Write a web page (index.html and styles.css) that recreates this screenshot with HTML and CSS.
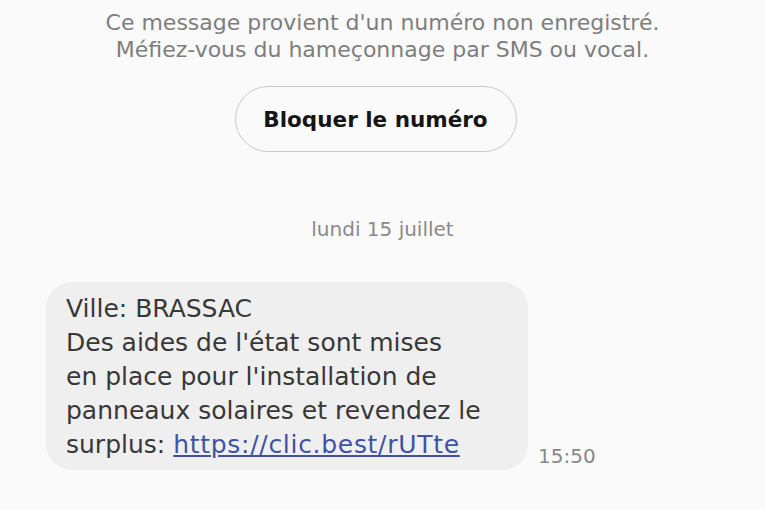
FILE: index.html
```html
<!DOCTYPE html>
<html lang="fr">
<head>
    <meta charset="UTF-8">
    <meta name="viewport" content="width=device-width, initial-scale=1.0">
    <title>Messages</title>
    <link rel="stylesheet" href="styles.css">
</head>
<body>
    <div class="thread">
        <p class="notice">Ce message provient d'un numéro non enregistré.<br>Méfiez-vous du hameçonnage par SMS ou vocal.</p>

        <button class="block-button" type="button">Bloquer le numéro</button>

        <p class="day">lundi 15 juillet</p>

        <div class="message-row">
            <div class="bubble">
                Ville: BRASSAC<br>
                Des aides de l'état sont mises<br>
                en place pour l'installation de<br>
                panneaux solaires et revendez le<br>
                surplus: <a href="#" class="link">https://clic.best/rUTte</a>
            </div>
            <span class="time">15:50</span>
        </div>
    </div>
</body>
</html>
```

FILE: styles.css
```css
body {
    margin: 0;
    background-color: #fafafa;
    font-family: 'DejaVu Sans', Roboto, sans-serif;
    height: 100vh;
    overflow: hidden;
}

.thread {
    display: flex;
    flex-direction: column;
    align-items: center;
    padding-top: 9px;
}

.notice {
    margin: 0;
    text-align: center;
    font-size: 22px;
    line-height: 27px;
    color: #7e7e7e;
}

.block-button {
    margin: 23px 14px 0 0;
    width: 282px;
    height: 66px;
    border: 1.5px solid #c9c9c9;
    border-radius: 33px;
    background: #fafafa;
    font-family: 'DejaVu Sans', Roboto, sans-serif;
    font-size: 21.5px;
    font-weight: bold;
    color: #151515;
}

.day {
    margin: 66px 0 0;
    font-size: 20px;
    line-height: 22px;
    color: #8a8a8a;
}

.message-row {
    align-self: stretch;
    display: flex;
    align-items: flex-end;
    gap: 10px;
    margin-top: 42px;
    padding-left: 46px;
}

.bubble {
    width: 442px;
    padding: 10px 20px 8px;
    background-color: #efefef;
    border-radius: 26px;
    font-size: 25px;
    line-height: 34px;
    color: #383838;
}

.link {
    color: #4052a8;
    letter-spacing: 0.7px;
}

.time {
    font-size: 20px;
    line-height: 24px;
    color: #888;
    padding-bottom: 2px;
}
```
